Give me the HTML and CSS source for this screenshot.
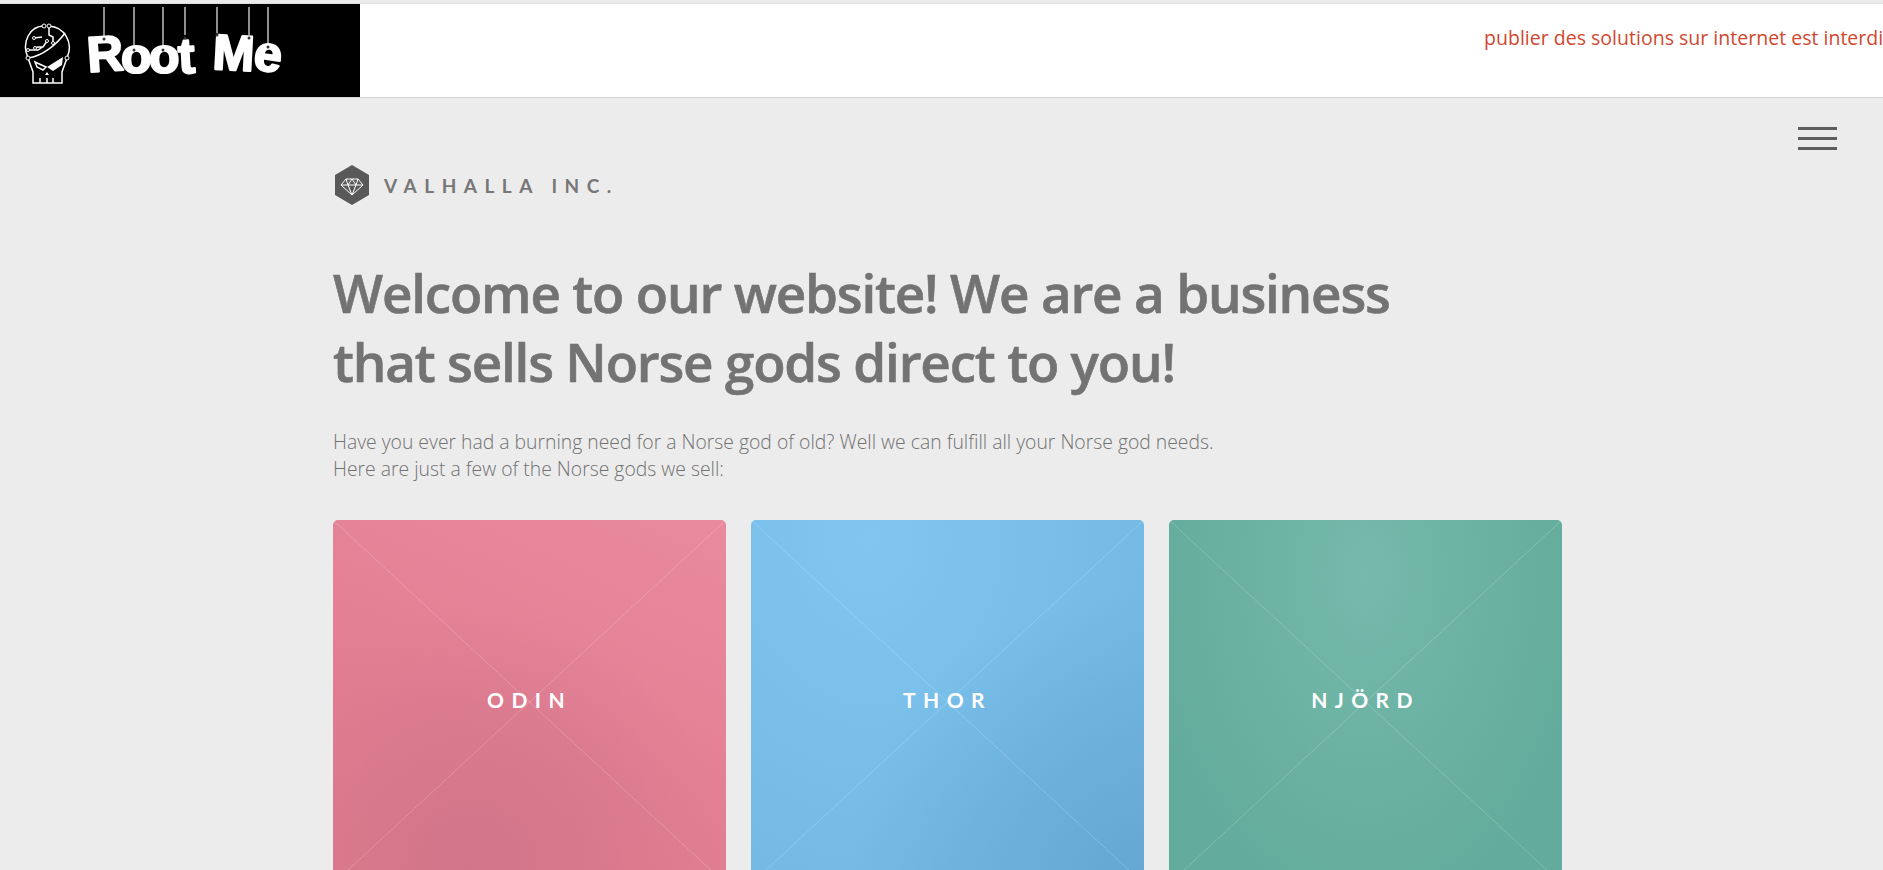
FILE: index.html
```html
<!DOCTYPE html>
<html lang="en">
<head>
    <meta charset="UTF-8">
    <title>Valhalla Inc.</title>
    <link rel="stylesheet" href="styles.css">
</head>
<body>
    <div class="topbar">
        <a href="#" class="rm-logo">
            <svg width="360" height="93" viewBox="0 4 360 93">
                <g class="skull">
                    <path d="M28 58C21 42 30 26 44 26M49 26C64 27 74 42 67 58L62 72V83H33V72L28 58"/>
                    <path d="M28 58C43 56 57 44 65 33"/>
                    <path d="M49 27V35L53 37V43M34 38L42 37M35 48L38 47H43L47 41M28 50H38L44 46"/>
                    <path d="M40 78V83M47 78V83M53 78V83"/>
                    <path d="M35 62L46 67L43 70L37 67Z"/>
                </g>
                <path class="skull-eye" d="M47 67L63 57L62 65L53 71Z"/>
                <path class="skull-eye" d="M47 72L45 75H49Z"/>
                <g class="skull-nodes">
                    <circle cx="44" cy="26" r="2"/>
                    <circle cx="49" cy="26" r="2"/>
                    <circle cx="28" cy="58" r="2"/>
                    <circle cx="67" cy="58" r="2"/>
                    <circle cx="34" cy="38" r="1.5"/>
                    <circle cx="35" cy="48" r="1.5"/>
                    <circle cx="28" cy="50" r="1.5"/>
                    <circle cx="53" cy="43" r="1.5"/>
                    <circle cx="47" cy="41" r="1.5"/>
                </g>
                <g class="strings">
                    <line x1="104" y1="7" x2="104" y2="37"/>
                    <line x1="134" y1="7" x2="134" y2="48"/>
                    <line x1="163" y1="7" x2="163" y2="48"/>
                    <line x1="185" y1="7" x2="185" y2="35"/>
                    <line x1="217" y1="7" x2="217" y2="33"/>
                    <line x1="249" y1="7" x2="249" y2="35"/>
                    <line x1="268" y1="7" x2="268" y2="45"/>
                </g>
                <g class="letters">
                    <text x="87" y="71" transform="rotate(-4 104 55)">R</text>
                    <text x="121" y="73">o</text>
                    <text x="149" y="73">o</text>
                    <text x="178" y="73" transform="rotate(-3 187 55)">t</text>
                    <text x="213" y="70" transform="rotate(3 233 50)">M</text>
                    <text x="254" y="71" transform="rotate(8 268 58)">e</text>
                </g>
                <g class="pins">
                    <circle cx="104" cy="39" r="1.5"/>
                    <circle cx="134" cy="50" r="1.5"/>
                    <circle cx="163" cy="50" r="1.5"/>
                    <circle cx="185" cy="38" r="1.5"/>
                    <circle cx="217" cy="35" r="1.5"/>
                    <circle cx="249" cy="38" r="1.5"/>
                    <circle cx="268" cy="47" r="1.5"/>
                </g>
            </svg>
        </a>
        <div class="notice">publier des solutions sur internet est interdit</div>
    </div>

    <div class="main">
        <div class="menu-toggle">
            <span></span>
            <span></span>
            <span></span>
        </div>

        <div class="container">
            <div class="brand">
                <svg width="36" height="40" viewBox="0 0 36 40">
                    <polygon class="hex" points="18,0 35,10 35,30 18,40 1,30 1,10"/>
                    <g class="gem">
                        <path d="M12 14H24L29 20L18 30L7 20Z"/>
                        <path d="M7 20H29M14 20L18 30L22 20M12 14L14 20L18 14L22 20L24 14"/>
                    </g>
                </svg>
                <span class="brand-name">VALHALLA INC.</span>
            </div>

            <h1>Welcome to our website! We are a business<br>that sells Norse gods direct to you!</h1>

            <p class="intro">Have you ever had a burning need for a Norse god of old? Well we can fulfill all your Norse god needs.<br>Here are just a few of the Norse gods we sell:</p>

            <div class="gods-grid">
                <a href="#" class="god-card odin"><span>ODIN</span></a>
                <a href="#" class="god-card thor"><span>THOR</span></a>
                <a href="#" class="god-card njord"><span>NJÖRD</span></a>
            </div>
        </div>
    </div>
</body>
</html>
```

FILE: styles.css
```css
html, body {
    margin: 0;
    height: 870px;
    overflow: hidden;
}

body {
    background-color: #ececec;
    font-family: "Open Sans", "Noto Sans", sans-serif;
}

.topbar {
    display: flex;
    height: 93px;
    margin-top: 3px;
    background-color: #fff;
    border-top: 1px solid #ddd;
    border-bottom: 1px solid #d6d6d6;
}

.rm-logo {
    display: block;
    flex: none;
    width: 360px;
    height: 93px;
    background-color: #000;
}

.skull path {
    fill: none;
    stroke: #fff;
    stroke-width: 1.5;
}

.skull-eye {
    fill: #fff;
}

.skull-nodes circle {
    fill: #000;
    stroke: #fff;
    stroke-width: 1;
}

.strings line {
    stroke: #ccc;
    stroke-width: 1.4;
}

.letters text {
    font-family: "Liberation Sans", Arial, sans-serif;
    font-size: 50px;
    font-weight: 700;
    fill: #fff;
    stroke: #fff;
    stroke-width: 2.2;
    stroke-linejoin: round;
}

.pins circle {
    fill: #333;
}

.notice {
    flex: 1;
    overflow: hidden;
    white-space: nowrap;
    padding: 20px 0 0 1124px;
    font-size: 19.55px;
    line-height: 28px;
    color: #d0482f;
}

.main {
    position: relative;
}

.menu-toggle {
    position: absolute;
    top: 29px;
    right: 46px;
    display: flex;
    flex-direction: column;
    gap: 7px;
    width: 39px;
}

.menu-toggle span {
    height: 3px;
    background-color: #5d5d5d;
}

.container {
    width: 1229px;
    margin-left: 333px;
    padding-top: 67px;
}

.brand {
    display: flex;
    align-items: center;
    gap: 14px;
    height: 40px;
    padding-left: 1px;
}

.hex {
    fill: #595959;
}

.gem path {
    fill: none;
    stroke: #fff;
    stroke-width: 1;
}

.brand-name {
    font-family: "Lato", sans-serif;
    font-size: 19px;
    font-weight: 700;
    letter-spacing: 7.5px;
    color: #777;
}

h1 {
    margin: 53px 0 0 0;
    font-size: 53px;
    font-weight: 600;
    line-height: 69px;
    letter-spacing: -1.2px;
    color: #737373;
    -webkit-text-stroke: .6px #737373;
}

.intro {
    margin: 32px 0 0 0;
    font-size: 19.35px;
    font-weight: 300;
    line-height: 27px;
    color: #727272;
}

.gods-grid {
    display: grid;
    grid-template-columns: repeat(3, 1fr);
    gap: 25px;
    margin-top: 38px;
}

.god-card {
    display: flex;
    align-items: center;
    justify-content: center;
    height: 364px;
    border-radius: 5px;
    color: #fff;
    text-decoration: none;
}

.god-card span {
    font-family: "Lato", sans-serif;
    font-size: 21px;
    font-weight: 700;
    letter-spacing: 7.4px;
    margin-top: -6px;
}

.odin {
    background:
        linear-gradient(to top right, transparent calc(50% - .7px), rgba(255, 255, 255, .2) 50%, transparent calc(50% + .7px)),
        linear-gradient(to bottom right, transparent calc(50% - .7px), rgba(255, 255, 255, .2) 50%, transparent calc(50% + .7px)),
        radial-gradient(circle at 35% 95%, #d1758a, rgba(209, 117, 138, 0) 60%),
        linear-gradient(205deg, #ea8a9f, #e27e92 60%, #e27c8c);
}

.thor {
    background:
        linear-gradient(to top right, transparent calc(50% - .7px), rgba(255, 255, 255, .2) 50%, transparent calc(50% + .7px)),
        linear-gradient(to bottom right, transparent calc(50% - .7px), rgba(255, 255, 255, .2) 50%, transparent calc(50% + .7px)),
        radial-gradient(circle at 100% 100%, #64a7d2, rgba(100, 167, 210, 0) 55%),
        radial-gradient(ellipse at 30% 5%, #80c6f0, #71b7e2 90%);
}

.njord {
    background:
        linear-gradient(to top right, transparent calc(50% - .7px), rgba(255, 255, 255, .2) 50%, transparent calc(50% + .7px)),
        linear-gradient(to bottom right, transparent calc(50% - .7px), rgba(255, 255, 255, .2) 50%, transparent calc(50% + .7px)),
        radial-gradient(ellipse at 50% 15%, #75baac, #63ab9c 80%);
}
```
